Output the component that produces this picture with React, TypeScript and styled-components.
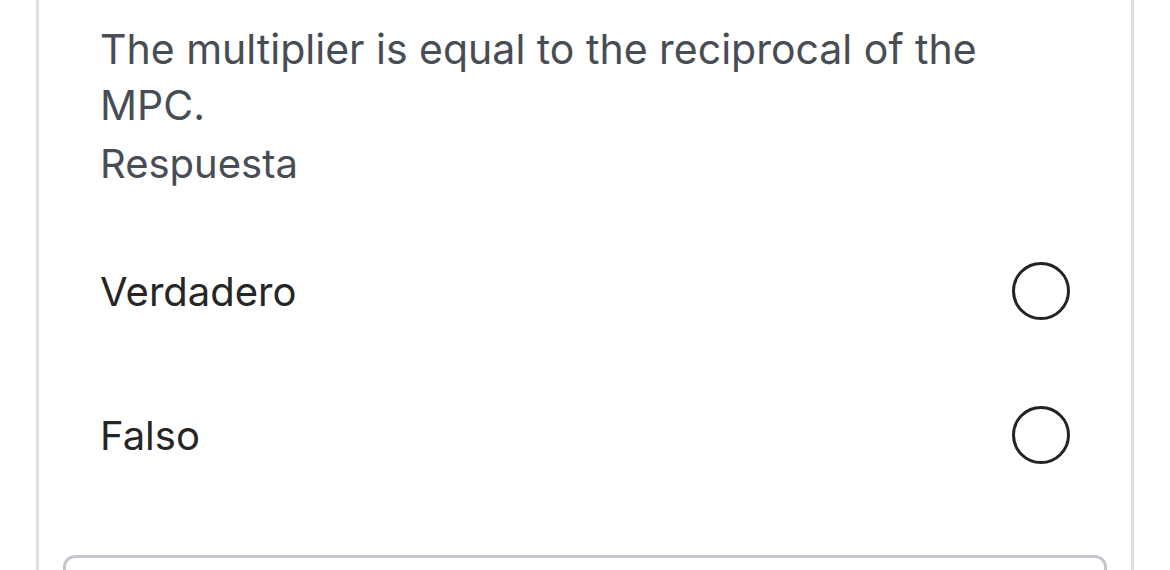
import React from 'react'
import styled, { createGlobalStyle } from 'styled-components'

const GlobalStyle = createGlobalStyle`
  html, body {
    margin: 0;
    padding: 0;
    background: #ffffff;
    overflow: hidden;
  }
  body {
    font-family: Inter, "Noto Sans", "Liberation Sans", sans-serif;
  }
`

const Page = styled.div`
  height: 570px;
  overflow: hidden;
`

const QuestionCard = styled.section`
  margin-left: 36px;
  width: 1098px;
  box-sizing: border-box;
  border-left: 3px solid #dde0e5;
  border-right: 3px solid #dde0e5;
  min-height: 600px;
  padding-top: 21px;
`

const Body = styled.div`
  padding: 0 61px;
`

const QuestionText = styled.p`
  margin: 0;
  font-size: 41px;
  line-height: 56px;
  color: #474d55;
`

const AnswerLabel = styled.p`
  margin: 3px 0 0;
  font-size: 40px;
  line-height: 56px;
  color: #474d55;
`

const Options = styled.ul`
  list-style: none;
  margin: 27px 0 0;
  padding: 0;
`

const Option = styled.li`
  display: flex;
  align-items: center;
  justify-content: space-between;
  height: 144px;
`

const OptionText = styled.span`
  font-size: 40px;
  color: #262626;
`

const Radio = styled.span`
  width: 58px;
  height: 58px;
  box-sizing: border-box;
  border: 3px solid #232323;
  border-radius: 50%;
`

const NextBox = styled.div`
  margin: 48px 24px 0;
  height: 40px;
  border: 3px solid #c3c7cd;
  border-radius: 12px;
`

export default function App() {
  return (
    <Page>
      <GlobalStyle />
      <QuestionCard>
        <Body>
          <QuestionText>The multiplier is equal to the reciprocal of the MPC.</QuestionText>
          <AnswerLabel>Respuesta</AnswerLabel>
          <Options>
            <Option>
              <OptionText>Verdadero</OptionText>
              <Radio />
            </Option>
            <Option>
              <OptionText>Falso</OptionText>
              <Radio />
            </Option>
          </Options>
        </Body>
        <NextBox />
      </QuestionCard>
    </Page>
  )
}
